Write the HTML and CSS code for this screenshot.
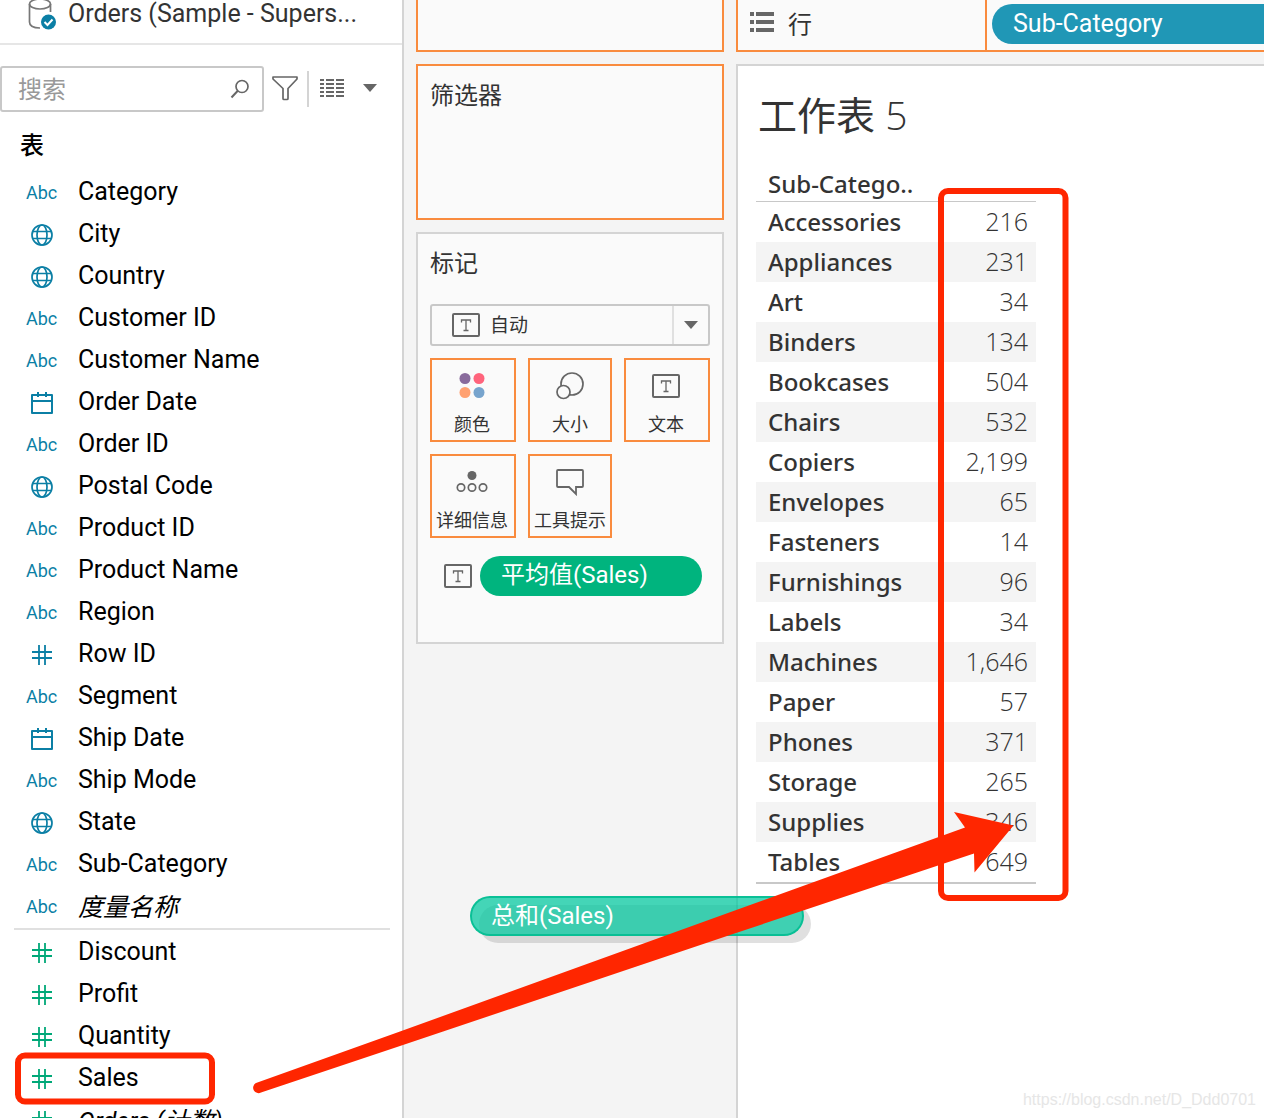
FILE: index.html
```html
<!DOCTYPE html>
<html lang="zh-CN">
<head>
<meta charset="utf-8">
<meta name="viewport" content="width=device-width, initial-scale=1">
<title>工作表 5</title>
<link rel="stylesheet" href="styles.css">
</head>
<body>
<svg class="defs" aria-hidden="true">
  <symbol id="globe" viewBox="0 0 24 24"><g fill="none" stroke="currentColor" stroke-width="1.7"><circle cx="12" cy="12" r="10"/><ellipse cx="12" cy="12" rx="5" ry="10"/><path d="M3 8.5H21M3 15.5H21"/></g></symbol>
  <symbol id="calendar" viewBox="0 0 24 24"><path d="M2 4H22V22H2ZM2 10H22M8 1V6M16 1V6" fill="none" stroke="currentColor" stroke-width="2" stroke-linejoin="round"/></symbol>
  <symbol id="hash" viewBox="0 0 24 24"><path d="M2 9H22M2 15H22M9 2V22M15 2V22" fill="none" stroke="currentColor" stroke-width="1.8"/></symbol>
  <symbol id="caret" viewBox="0 0 14 8"><path d="M0 0H14L7 8Z" fill="#666"/></symbol>
  <symbol id="textbox" viewBox="0 0 28 24"><rect x="1" y="1" width="26" height="22" rx="1" fill="none" stroke="#666" stroke-width="2"/><path d="M9.5 9.5V7H18.5V9.5M14 7V17.5M11.5 17.5H16.5" fill="none" stroke="#666" stroke-width="1.3"/></symbol>
</svg>
<div class="app">
  <aside class="sidebar">
    <header class="source">
      <svg class="source-icon" viewBox="0 0 30 32"><g fill="none" stroke="#777" stroke-width="1.7"><ellipse cx="12" cy="6" rx="10.5" ry="5"/><path d="M1.500 6V24C1.500 28 6 30 12 30M22.500 6V14"/></g><circle cx="20.500" cy="24" r="7.500" fill="#0b7fa5"/><path d="M16.500 24L19.500 27L24.500 21.500" fill="none" stroke="#fff" stroke-width="2"/></svg>
      <span>Orders (Sample - Supers...</span>
    </header>
    <div class="tools">
      <label class="search">
        <input type="text" placeholder="搜索" aria-label="搜索">
        <svg width="20" height="20" viewBox="0 0 20 20"><g fill="none" stroke="#666" stroke-width="1.700"><circle cx="12" cy="7.500" r="6"/><path d="M7.800 11.800L1.500 18.500" stroke-width="2"/></g></svg>
      </label>
      <button class="tool filter" aria-label="筛选"><svg width="28" height="26" viewBox="0 0 28 26"><path d="M2 2H26V4L17 13.500V23.500Q17 24.500 16 24.500H13Q12 24.500 12 23.500V13.500L2 4Z" fill="none" stroke="#666" stroke-width="1.700" stroke-linejoin="round"/></svg></button>
      <button class="tool view" aria-label="查看方式"><svg width="24" height="18" viewBox="0 0 24 18"><path d="M0 1H24M0 5H24M0 9H24M0 13H24M0 17H24" stroke="#666" stroke-width="2" stroke-dasharray="4 2 8 2 8 0"/></svg></button>
      <button class="tool more" aria-label="更多"><svg width="14" height="8"><use href="#caret"/></svg></button>
    </div>
    <h2 class="tables-title">表</h2>
    <ul class="fields">
      <li><span class="type">Abc</span>Category</li>
      <li><svg class="type"><use href="#globe"/></svg>City</li>
      <li><svg class="type"><use href="#globe"/></svg>Country</li>
      <li><span class="type">Abc</span>Customer ID</li>
      <li><span class="type">Abc</span>Customer Name</li>
      <li><svg class="type"><use href="#calendar"/></svg>Order Date</li>
      <li><span class="type">Abc</span>Order ID</li>
      <li><svg class="type"><use href="#globe"/></svg>Postal Code</li>
      <li><span class="type">Abc</span>Product ID</li>
      <li><span class="type">Abc</span>Product Name</li>
      <li><span class="type">Abc</span>Region</li>
      <li><svg class="type"><use href="#hash"/></svg>Row ID</li>
      <li><span class="type">Abc</span>Segment</li>
      <li><svg class="type"><use href="#calendar"/></svg>Ship Date</li>
      <li><span class="type">Abc</span>Ship Mode</li>
      <li><svg class="type"><use href="#globe"/></svg>State</li>
      <li><span class="type">Abc</span>Sub-Category</li>
      <li><span class="type">Abc</span><em>度量名称</em></li>
    </ul>
    <ul class="fields measures">
      <li><svg class="type"><use href="#hash"/></svg>Discount</li>
      <li><svg class="type"><use href="#hash"/></svg>Profit</li>
      <li><svg class="type"><use href="#hash"/></svg>Quantity</li>
      <li><svg class="type"><use href="#hash"/></svg>Sales</li>
      <li><svg class="type"><use href="#hash"/></svg><em>Orders (计数)</em></li>
    </ul>
  </aside>

  <section class="shelves">
    <div class="card pages"></div>
    <div class="card filters"><h3>筛选器</h3></div>
    <div class="card marks">
      <h3>标记</h3>
      <div class="mark-type">
        <svg width="28" height="24"><use href="#textbox"/></svg>
        <select aria-label="标记类型"><option>自动</option></select>
        <span class="mark-caret"><svg width="14" height="8"><use href="#caret"/></svg></span>
      </div>
      <div class="mark-buttons">
        <button><svg width="32" height="28" viewBox="0 0 32 28"><circle cx="9" cy="6.500" r="5.500" fill="#896b9c"/><circle cx="23" cy="6.500" r="5.500" fill="#ff647c"/><circle cx="9" cy="20.500" r="5.500" fill="#ffa171"/><circle cx="23" cy="20.500" r="5.500" fill="#77a4cd"/></svg>颜色</button>
        <button><svg width="32" height="28" viewBox="0 0 32 28"><g fill="#fafafa" stroke="#666" stroke-width="1.700"><circle cx="18" cy="12" r="11"/><circle cx="9.500" cy="20" r="6.500"/></g></svg>大小</button>
        <button><svg width="28" height="28" viewBox="0 -2 28 28"><use href="#textbox" width="28" height="24"/></svg>文本</button>
        <button><svg width="32" height="28" viewBox="0 0 32 28"><circle cx="16" cy="7.500" r="4.500" fill="#666"/><g fill="none" stroke="#666" stroke-width="1.700"><circle cx="5" cy="19.500" r="3.700"/><circle cx="16" cy="19.500" r="3.700"/><circle cx="27" cy="19.500" r="3.700"/></g></svg>详细信息</button>
        <button><svg width="32" height="28" viewBox="0 0 32 28"><path d="M4 2H28Q29 2 29 3V18Q29 19 28 19H22V26L15 19H4Q3 19 3 18V3Q3 2 4 2Z" fill="none" stroke="#666" stroke-width="1.800"/></svg>工具提示</button>
      </div>
      <div class="mark-field">
        <svg width="28" height="24"><use href="#textbox"/></svg>
        <span class="pill measure">平均值(Sales)</span>
      </div>
    </div>
  </section>

  <main class="main">
    <div class="rows-shelf">
      <div class="rows-label"><svg width="24" height="20" viewBox="0 0 24 20"><path d="M0 2H24M0 10H24M0 18H24" stroke="#666" stroke-width="4" stroke-dasharray="4 2 18 0"/></svg>行</div>
      <div class="rows-drop"><span class="pill dimension">Sub-Category</span></div>
    </div>
    <div class="sheet">
      <h1>工作表 <span class="sheet-number">5</span></h1>
      <table class="crosstab">
        <thead><tr><th scope="col" colspan="2">Sub-Catego..</th></tr></thead>
        <tbody>
          <tr><th scope="row">Accessories</th><td>216</td></tr>
          <tr><th scope="row">Appliances</th><td>231</td></tr>
          <tr><th scope="row">Art</th><td>34</td></tr>
          <tr><th scope="row">Binders</th><td>134</td></tr>
          <tr><th scope="row">Bookcases</th><td>504</td></tr>
          <tr><th scope="row">Chairs</th><td>532</td></tr>
          <tr><th scope="row">Copiers</th><td>2,199</td></tr>
          <tr><th scope="row">Envelopes</th><td>65</td></tr>
          <tr><th scope="row">Fasteners</th><td>14</td></tr>
          <tr><th scope="row">Furnishings</th><td>96</td></tr>
          <tr><th scope="row">Labels</th><td>34</td></tr>
          <tr><th scope="row">Machines</th><td>1,646</td></tr>
          <tr><th scope="row">Paper</th><td>57</td></tr>
          <tr><th scope="row">Phones</th><td>371</td></tr>
          <tr><th scope="row">Storage</th><td>265</td></tr>
          <tr><th scope="row">Supplies</th><td>346</td></tr>
          <tr><th scope="row">Tables</th><td>649</td></tr>
        </tbody>
      </table>
    </div>
  </main>

  <div class="drag-pill">总和(Sales)</div>
  <svg class="annotations" width="1264" height="1118" viewBox="0 0 1264 1118" aria-hidden="true">
    <g fill="none" stroke="#ff2600" stroke-width="6"><rect x="18" y="1055.500" width="194" height="46" rx="7"/><rect x="941" y="191" width="124.500" height="707" rx="7"/></g>
    <path d="M256 1083L400 1031.500L730 912.300L965 827.500L954 812L1013.500 825.500L974.500 872.500L974 853.500L730 935L400 1046L261 1092.500A5 5 0 0 1 256 1083Z" fill="#ff2600"/>
  </svg>
  <span class="watermark">https://blog.csdn.net/D_Ddd0701</span>
</div>
</body>
</html>
```
FILE: styles.css
```css
* { box-sizing: border-box; }
body {
  margin: 0;
  font-family: Roboto, "Noto Sans CJK SC", sans-serif;
  font-size: 24px;
  color: #333;
  background: #fff;
}
h1, h2, h3, ul { margin: 0; padding: 0; font-weight: 400; }
svg { display: block; flex: none; }
button, input, select { font: inherit; color: inherit; }
.defs { position: absolute; width: 0; height: 0; }

.app {
  position: relative;
  display: grid;
  grid-template-columns: 404px 332px minmax(0, 1fr);
  height: 100vh;
  overflow: hidden;
  background: #f4f4f4;
}

/* Data pane */
.sidebar {
  min-width: 0;
  overflow: hidden;
  background: #fff;
  border-right: 2px solid #d4d4d4;
}
.source {
  display: flex;
  gap: 10px;
  height: 45px;
  padding-left: 28px;
  border-bottom: 2px solid #e6e6e6;
  font-size: 25px;
  line-height: 28px;
}
.source-icon { width: 30px; height: 32px; margin-top: -2px; }
.tools { display: flex; align-items: center; height: 46px; margin-top: 21px; }
.search {
  display: flex;
  align-items: center;
  width: 264px;
  height: 46px;
  padding: 0 12px 0 16px;
  border: 2px solid #c8c8c8;
  border-radius: 3px;
}
.search input { flex: 1; min-width: 0; padding: 2px 0 0; border: 0; outline: 0; background: none; }
.search input::placeholder { color: #999; opacity: 1; }
.tool { display: flex; align-items: center; padding: 0 0 2px; border: 0; background: none; }
.filter { height: 36px; padding: 0 8px 2px 7px; border-right: 2px solid #d4d4d4; }
.view { padding-left: 11px; }
.more { padding-left: 19px; }
.tables-title { padding: 17px 20px 7px; font-size: 24px; line-height: 35px; color: #000; font-weight: 500; }
.fields { list-style: none; color: #000; }
.fields li { display: flex; align-items: center; gap: 20px; height: 42px; padding: 0 0 2px 26px; font-size: 25px; white-space: nowrap; }
.type { flex: none; width: 32px; height: 24px; margin-top: 4px; color: #0b7fa5; font-size: 18px; line-height: 24px; }
.measures { margin: 1px 12px 0 14px; padding-top: 1px; border-top: 2px solid #e0e0e0; }
.measures li { padding-left: 12px; }
.measures .type { color: #00a878; }

/* Shelves and marks */
.shelves { display: flex; flex-direction: column; gap: 12px; padding: 0 12px; }
.card { padding: 12px; border: 2px solid #d4d4d4; background: #fafafa; }
.card h3 { font-size: 24px; line-height: 36px; }
.pages { height: 52px; border-color: #f98b3e; border-top: 0; }
.filters { height: 156px; border-color: #f98b3e; }
.marks { height: 412px; }
.mark-type {
  display: flex;
  align-items: center;
  height: 42px;
  margin-top: 22px;
  padding-left: 20px;
  border: 2px solid #c8c8c8;
  border-radius: 3px;
  font-size: 19px;
}
.mark-type select { flex: 1; height: 38px; margin-left: 10px; padding: 0; border: 0; appearance: none; background: none; }
.mark-caret { display: grid; place-items: center; width: 36px; height: 38px; border-left: 2px solid #e0e0e0; }
.mark-buttons { display: grid; grid-template-columns: 86px 84px 86px; gap: 12px; margin-top: 12px; }
.mark-buttons button {
  display: flex;
  flex-direction: column;
  align-items: center;
  gap: 11px;
  height: 84px;
  padding: 12px 2px 0 0;
  border: 2px solid #f98b3e;
  background: #fafafa;
  font-size: 18px;
  line-height: 28px;
  white-space: nowrap;
}
.mark-buttons button:nth-child(3n + 2) { padding-right: 0; }
.mark-field { display: flex; align-items: center; gap: 8px; margin-top: 18px; padding: 0 8px 0 14px; }
.pill { display: block; flex: 1; height: 40px; padding-left: 21px; border-radius: 20px; color: #fff; font-size: 25px; line-height: 39px; }
.measure { background: #00b47e; font-size: 24px; }
.dimension { background: #2097b6; }

/* Worksheet */
.main { display: flex; flex-direction: column; gap: 12px; min-width: 0; }
.rows-shelf { display: flex; height: 52px; border: solid #f98b3e; border-width: 0 0 2px 2px; background: #fafafa; }
.rows-label { display: flex; align-items: center; gap: 14px; width: 249px; padding: 0 0 6px 12px; border-right: 2px solid #f98b3e; }
.rows-drop { display: flex; flex: 1; padding: 4px 0 0 5px; }
.dimension { border-radius: 20px 0 0 20px; }
.sheet { flex: 1; padding: 19px 18px; border: solid #d4d4d4; border-width: 2px 0 0 2px; background: #fff; }
.sheet h1 { padding-left: 2px; font: 400 39px/60px "Open Sans", "Noto Sans CJK SC", sans-serif; }
.sheet-number { font-weight: 300; }
.crosstab {
  width: 280px;
  margin-top: 21px;
  border-spacing: 0;
  border-bottom: 2px solid #c8c8c8;
  font: 24px/40px "Noto Sans", sans-serif;
}
.crosstab th { padding: 0 0 0 12px; font-weight: 500; text-align: left; }
.crosstab td { padding: 0 8px 0 0; font-family: "Open Sans", sans-serif; font-size: 25px; font-weight: 300; line-height: 38px; vertical-align: top; text-align: right; }
.crosstab thead th { height: 36px; line-height: 35px; border-bottom: 1px solid #c8c8c8; }
.crosstab tbody tr { height: 40px; }
.crosstab tbody tr:nth-child(even) { background: #f4f4f4; }

/* Floating layers */
.drag-pill {
  position: absolute;
  left: 470px;
  top: 896px;
  z-index: 1;
  width: 334px;
  height: 40px;
  padding-left: 21px;
  color: #fff;
  line-height: 40px;
}
.drag-pill::before,
.drag-pill::after {
  content: "";
  position: absolute;
  border-radius: 20px;
}
.drag-pill::before {
  inset: 9px -7px -7px 9px;
  z-index: -2;
  background: rgba(0, 0, 0, .12);
}
.drag-pill::after {
  inset: 0;
  z-index: -1;
  border: 2px solid rgba(0, 188, 145, .85);
  background: rgba(0, 201, 160, .72);
}
.annotations { position: absolute; left: 0; top: 0; z-index: 2; pointer-events: none; }
.watermark { position: absolute; right: 8px; bottom: 8px; font: 16px/20px "Liberation Sans", sans-serif; color: #e6e6e6; }
```
